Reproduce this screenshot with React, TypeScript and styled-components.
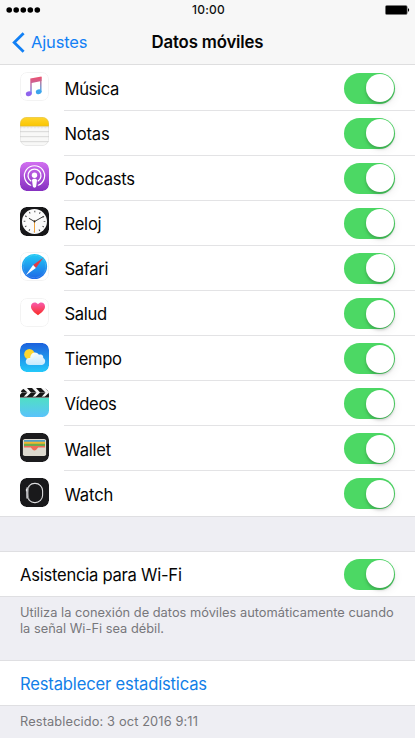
import React from "react";
import styled, { createGlobalStyle } from "styled-components";

const GlobalStyle = createGlobalStyle`
  * { box-sizing: border-box; }
  body { margin: 0; background: #efeff4; }
`;

const Screen = styled.div`
  display: flex;
  flex-direction: column;
  width: 415px;
  height: 738px;
  overflow: hidden;
  background: #eeeef3;
  color: #050505;
  font-family: Inter, "Liberation Sans", sans-serif;
`;

const Header = styled.header`
  flex: none;
  height: 65px;
  background: #f7f7f7;
  border-bottom: 1px solid #dededf;
`;

const StatusBar = styled.div`
  display: grid;
  grid-template-columns: 1fr auto 1fr;
  align-items: center;
  height: 20px;
  padding: 0 5px 0 6px;
`;

const Clock = styled.span`
  padding-left: 1px;
  font-size: 12px;
  line-height: 20px;
  font-weight: 500;
  letter-spacing: 0.2px;
  color: #111;
`;

const BatteryIcon = styled.svg`
  justify-self: end;
`;

const NavBar = styled.div`
  display: grid;
  grid-template-columns: 1fr auto 1fr;
  align-items: center;
  height: 44px;
  padding: 0 12px;
`;

const BackButton = styled.button`
  display: flex;
  align-items: center;
  gap: 6px;
  justify-self: start;
  padding: 0;
  border: 0;
  background: none;
  color: #1280f5;
  font: 400 16.5px/22px Inter, sans-serif;
  letter-spacing: -0.15px;
`;

const Title = styled.h1`
  margin: 0;
  font-size: 16.8px;
  font-weight: 600;
  line-height: 22px;
  letter-spacing: -0.17px;
`;

const List = styled.div`
  display: flex;
  flex-direction: column;
  flex: none;
  padding-top: 0.6px;
  background: #fff;
  border-bottom: 1px solid #dfdfe2;
`;

const AppRow = styled.div`
  display: flex;
  align-items: center;
  height: 45.08px;
  padding-left: 20px;
`;

const AppIcon = styled.svg`
  flex: none;
  width: 29px;
  height: 29px;
  margin-bottom: 3px;
  border-radius: 6.5px;
`;

const RowBody = styled.div<{ $last?: boolean }>`
  display: flex;
  flex: 1;
  align-items: center;
  justify-content: space-between;
  height: 100%;
  margin-left: 15px;
  padding: 1px 20px 0 0.5px;
  border-bottom: 1px solid ${(p) => (p.$last ? "transparent" : "#e3e3e5")};
`;

const Label = styled.span<{ $spacing?: number; $link?: boolean }>`
  padding-top: 1.5px;
  font-size: 16.6px;
  line-height: 22px;
  letter-spacing: ${(p) => p.$spacing ?? -0.25}px;
  color: ${(p) => (p.$link ? "#1280e8" : "inherit")};
`;

const Switch = styled.button`
  display: flex;
  justify-content: flex-end;
  flex: none;
  width: 51px;
  height: 31px;
  padding: 1.5px;
  border: 0;
  border-radius: 16px;
  background: #4cd864;
`;

const Knob = styled.span`
  width: 28px;
  height: 28px;
  border-radius: 50%;
  background: #fff;
  box-shadow: 0 2px 3px rgba(0, 0, 0, 0.2), 2px 3px 8px rgba(0, 0, 0, 0.06);
`;

const Group = styled.section<{ $gap: number }>`
  flex: none;
  margin-top: ${(p) => p.$gap}px;
`;

const PlainRow = styled.div`
  display: flex;
  align-items: center;
  justify-content: space-between;
  height: 46px;
  padding: 0 20px;
  background: #fff;
  border: solid #dfdfe2;
  border-width: 1px 0;
`;

const Footnote = styled.p<{ $spacing?: number }>`
  margin: 0;
  padding: 8px 20px 0;
  font-size: 12.8px;
  line-height: 16px;
  letter-spacing: ${(p) => p.$spacing ?? 0.02}px;
  white-space: nowrap;
  color: #77777b;
`;

const Toggle = () => (
  <Switch role="switch" aria-checked="true">
    <Knob />
  </Switch>
);

const MusicIcon = () => (
  <AppIcon viewBox="0 0 29 29">
    <defs>
      <linearGradient id="note" x1="0" y1="0" x2="0" y2="1">
        <stop offset="0" stopColor="#f0506c" />
        <stop offset=".45" stopColor="#c065a0" />
        <stop offset="1" stopColor="#527cf0" />
      </linearGradient>
      <linearGradient id="noteRight" x1="0" y1="0" x2="0" y2="1">
        <stop offset="0" stopColor="#ee5470" />
        <stop offset="1" stopColor="#38a8ee" />
      </linearGradient>
    </defs>
    <rect x=".5" y=".5" width="28" height="28" rx="6.3" fill="#fff" stroke="#f3f3f3" />
    <path d="M10.3 6.5 21.5 4.5V9L11.7 10.9V21.5H10.3Z" fill="url(#note)" />
    <path d="M20.1 5H21.5V20H20.1Z" fill="url(#noteRight)" />
    <ellipse cx="8.8" cy="21.8" rx="3" ry="2.4" fill="#9064ed" transform="rotate(-18 8.8 21.8)" />
    <ellipse cx="18.7" cy="19.8" rx="2.9" ry="2.3" fill="#3ca5ec" transform="rotate(-18 18.7 19.8)" />
  </AppIcon>
);

const NotesIcon = () => (
  <AppIcon viewBox="0 0 29 29">
    <defs>
      <linearGradient id="yellow" x1="0" y1="0" x2="0" y2="1">
        <stop stopColor="#ffd52f" />
        <stop offset="1" stopColor="#fac600" />
      </linearGradient>
    </defs>
    <rect width="29" height="29" rx="6.5" fill="#f8f8f7" />
    <path d="M0 0H29V9H0Z" fill="url(#yellow)" />
    <path d="M0 9.2H29" stroke="#d9b443" strokeWidth=".7" />
    <path d="M0 10.7H29" stroke="#c9c5b8" strokeWidth=".6" strokeDasharray=".7 .7" />
    <path d="M0 14.7H29M0 19.7H29M0 24.7H29" stroke="#cdcdcd" strokeWidth=".8" />
    <rect x=".3" y=".3" width="28.4" height="28.4" rx="6.3" fill="none" stroke="#bbb" strokeOpacity=".5" strokeWidth=".6" />
  </AppIcon>
);

const PodcastsIcon = () => (
  <AppIcon viewBox="0 0 29 29">
    <defs>
      <linearGradient id="purple" x1="0" y1="0" x2="0" y2="1">
        <stop stopColor="#d16ff0" />
        <stop offset="1" stopColor="#8530c0" />
      </linearGradient>
    </defs>
    <rect width="29" height="29" rx="6.5" fill="url(#purple)" />
    <g fill="none" stroke="#fff" strokeLinecap="round">
      <path d="M10.7 23.2A10.1 10.1 0 1 1 18.3 23.2" strokeWidth="1.2" />
      <path d="M10.8 18.9A6.5 6.5 0 1 1 18.2 18.9" strokeWidth="1.3" />
    </g>
    <circle cx="14.5" cy="13.2" r="2.7" fill="#fff" />
    <path d="M12 18.2C12 16.2 17 16.2 17 18.2L16.2 24.3C16 26.2 13 26.2 12.8 24.3Z" fill="#fff" />
  </AppIcon>
);

const ClockIcon = () => (
  <AppIcon viewBox="0 0 29 29">
    <rect width="29" height="29" rx="6.5" fill="#171719" />
    <circle cx="14.5" cy="14.5" r="12.5" fill="#fafafa" />
    <circle cx="14.5" cy="14.5" r="10" fill="none" stroke="#555" strokeWidth="1.7" strokeDasharray="1.1 4.136" strokeDashoffset=".55" />
    <path d="M14.5 14.5 9.3 11.5M14.5 14.5 23.2 9.6" stroke="#222" strokeWidth=".9" strokeLinecap="round" />
    <path d="M14.5 13V25.5" stroke="#f0a33c" strokeWidth="1" />
    <circle cx="14.5" cy="14.5" r=".9" fill="#222" />
  </AppIcon>
);

const SafariIcon = () => (
  <AppIcon viewBox="0 0 29 29">
    <defs>
      <linearGradient id="compass" x1="0" y1="0" x2="0" y2="1">
        <stop stopColor="#20cbf5" />
        <stop offset="1" stopColor="#1e67e7" />
      </linearGradient>
    </defs>
    <rect x=".5" y=".5" width="28" height="28" rx="6.3" fill="#fff" stroke="#f3f3f3" />
    <circle cx="14.5" cy="14.5" r="12.6" fill="url(#compass)" />
    <circle cx="14.5" cy="14.5" r="11.2" fill="none" stroke="#d8f2ff" strokeOpacity=".5" strokeWidth=".9" strokeDasharray=".4 .9" />
    <path d="M23.2 5.8 13.1 13.1 15.9 15.9Z" fill="#e33b43" />
    <path d="M5.8 23.2 13.1 13.1 15.9 15.9Z" fill="#fff" />
  </AppIcon>
);

const HealthIcon = () => (
  <AppIcon viewBox="0 0 29 29">
    <defs>
      <linearGradient id="heart" x1="0" y1="0" x2="0" y2="1">
        <stop stopColor="#f95bac" />
        <stop offset="1" stopColor="#f92d25" />
      </linearGradient>
    </defs>
    <rect x=".5" y=".5" width="28" height="28" rx="6.3" fill="#fff" stroke="#f3f3f3" />
    <path d="M18 17.2C13.6 14 11 11.7 11 8.5C11 4.4 15.8 3.3 18 6.3C20.2 3.3 25 4.4 25 8.5C25 11.7 22.4 14 18 17.2Z" fill="url(#heart)" />
  </AppIcon>
);

const WeatherIcon = () => (
  <AppIcon viewBox="0 0 29 29">
    <defs>
      <linearGradient id="sky" x1="0" y1="0" x2="0" y2="1">
        <stop stopColor="#1c61dd" />
        <stop offset="1" stopColor="#24c9fa" />
      </linearGradient>
      <linearGradient id="cloud" x1="0" y1="0" x2="0" y2="1">
        <stop stopColor="#fff" />
        <stop offset="1" stopColor="#cdedfe" />
      </linearGradient>
    </defs>
    <rect width="29" height="29" rx="6.5" fill="url(#sky)" />
    <circle cx="9.4" cy="11.2" r="5.2" fill="#fed630" />
    <path d="M9.8 22C3.8 22 4.9 14.3 10.2 15C10.4 9.8 15.7 7.4 19 11.7C22.3 10.5 23.7 13.2 23.2 15C26.5 16.5 25.5 22 21.6 22Z" fill="url(#cloud)" fillOpacity=".96" />
  </AppIcon>
);

const VideosIcon = () => (
  <AppIcon viewBox="0 0 29 29">
    <defs>
      <linearGradient id="aqua" x1="0" y1="0" x2="0" y2="1">
        <stop stopColor="#50dfc5" />
        <stop offset="1" stopColor="#5ac3fb" />
      </linearGradient>
    </defs>
    <rect width="29" height="29" rx="6.5" fill="#f7f7f7" />
    <path d="M0 9.8H29V29H0Z" fill="url(#aqua)" />
    <path d="M-3 0H2.5L7.5 4.5 3.5 9H-2L2 4.5ZM7 0H12L16.5 4.5 12.5 9H6.5L11 4.5ZM16 0H21L25.5 4.5 21.5 9H15.5L20 4.5ZM25 0H29V9H24.5L29 4.5Z" fill="#171717" />
    <path d="M0 9.1H29" stroke="#222" strokeWidth=".9" />
    <path d="M0 4.5H29" stroke="#eee" strokeWidth=".35" />
  </AppIcon>
);

const WalletIcon = () => (
  <AppIcon viewBox="0 0 29 29">
    <rect width="29" height="29" rx="6.5" fill="#1c1c1e" />
    <rect x="3" y="6" width="23" height="17" rx="1.8" fill="#dddacf" />
    <path d="M4 7H25V9H4Z" fill="#529fc3" />
    <path d="M4 8.8H25V11H4Z" fill="#f1b831" />
    <path d="M4 10.8H25V13.5H4Z" fill="#6dac4d" />
    <path d="M4 13H25V14.5H18.8C17 14.5 17 17.4 14.5 17.4S12 14.5 10.2 14.5H4Z" fill="#f06c58" />
    <path d="M3.4 7V22M25.6 7V22" stroke="#dddacf" strokeWidth=".9" />
  </AppIcon>
);

const WatchIcon = () => (
  <AppIcon viewBox="0 0 29 29">
    <rect width="29" height="29" rx="6.5" fill="#19191b" />
    <rect x="7.2" y="5.4" width="15.4" height="19.2" rx="7.4" fill="none" stroke="#dcdcde" strokeWidth="1.1" />
    <path d="M9.4 7.5C7.8 11 7.8 19 9.4 22.5" fill="none" stroke="#aaa" strokeWidth=".7" />
    <path d="M7 9.5V20.5" stroke="#bcbcc0" strokeWidth="1.5" />
    <path d="M6.4 11V13.3" stroke="#eee" strokeWidth="1" />
  </AppIcon>
);

const apps = [
  { name: "Música", Icon: MusicIcon, spacing: -0.35 },
  { name: "Notas", Icon: NotesIcon, spacing: -0.2 },
  { name: "Podcasts", Icon: PodcastsIcon },
  { name: "Reloj", Icon: ClockIcon },
  { name: "Safari", Icon: SafariIcon, spacing: -0.35 },
  { name: "Salud", Icon: HealthIcon, spacing: -0.3 },
  { name: "Tiempo", Icon: WeatherIcon, spacing: -0.3 },
  { name: "Vídeos", Icon: VideosIcon, spacing: -0.35 },
  { name: "Wallet", Icon: WalletIcon },
  { name: "Watch", Icon: WatchIcon, spacing: -0.15 },
];

export default function App() {
  return (
    <Screen>
      <GlobalStyle />
      <Header>
        <StatusBar>
          <svg width="36" height="8" viewBox="0 0 36 8" fill="#000">
            {[3.2, 10.2, 17.3, 24.3, 31.3].map((x) => (
              <circle key={x} cx={x} cy="4" r="2.8" />
            ))}
          </svg>
          <Clock>10:00</Clock>
          <BatteryIcon width="25" height="10" viewBox="0 0 25 10">
            <rect x=".4" y=".4" width="21.8" height="9.2" rx="1.5" fill="#000" stroke="#777" strokeWidth=".6" />
            <path d="M23 3.3C24.5 3.5 24.5 6.5 23 6.7Z" fill="#000" />
          </BatteryIcon>
        </StatusBar>
        <NavBar>
          <BackButton>
            <svg width="13" height="21" viewBox="0 0 13 21">
              <path d="M11.6 1.2 2.2 10.5 11.6 19.8" fill="none" stroke="#1280f5" strokeWidth="2.8" />
            </svg>
            Ajustes
          </BackButton>
          <Title>Datos móviles</Title>
        </NavBar>
      </Header>
      <List>
        {apps.map(({ name, Icon, spacing }, i) => (
          <AppRow key={name}>
            <Icon />
            <RowBody $last={i === apps.length - 1}>
              <Label $spacing={spacing}>{name}</Label>
              <Toggle />
            </RowBody>
          </AppRow>
        ))}
      </List>
      <Group $gap={34}>
        <PlainRow>
          <Label>Asistencia para Wi-Fi</Label>
          <Toggle />
        </PlainRow>
        <Footnote>
          Utiliza la conexión de datos móviles automáticamente cuando
          <br />
          la señal Wi-Fi sea débil.
        </Footnote>
      </Group>
      <Group $gap={23}>
        <PlainRow>
          <Label $link $spacing={-0.17}>Restablecer estadísticas</Label>
        </PlainRow>
        <Footnote $spacing={0.13}>Restablecido: 3 oct 2016 9:11</Footnote>
      </Group>
    </Screen>
  );
}
